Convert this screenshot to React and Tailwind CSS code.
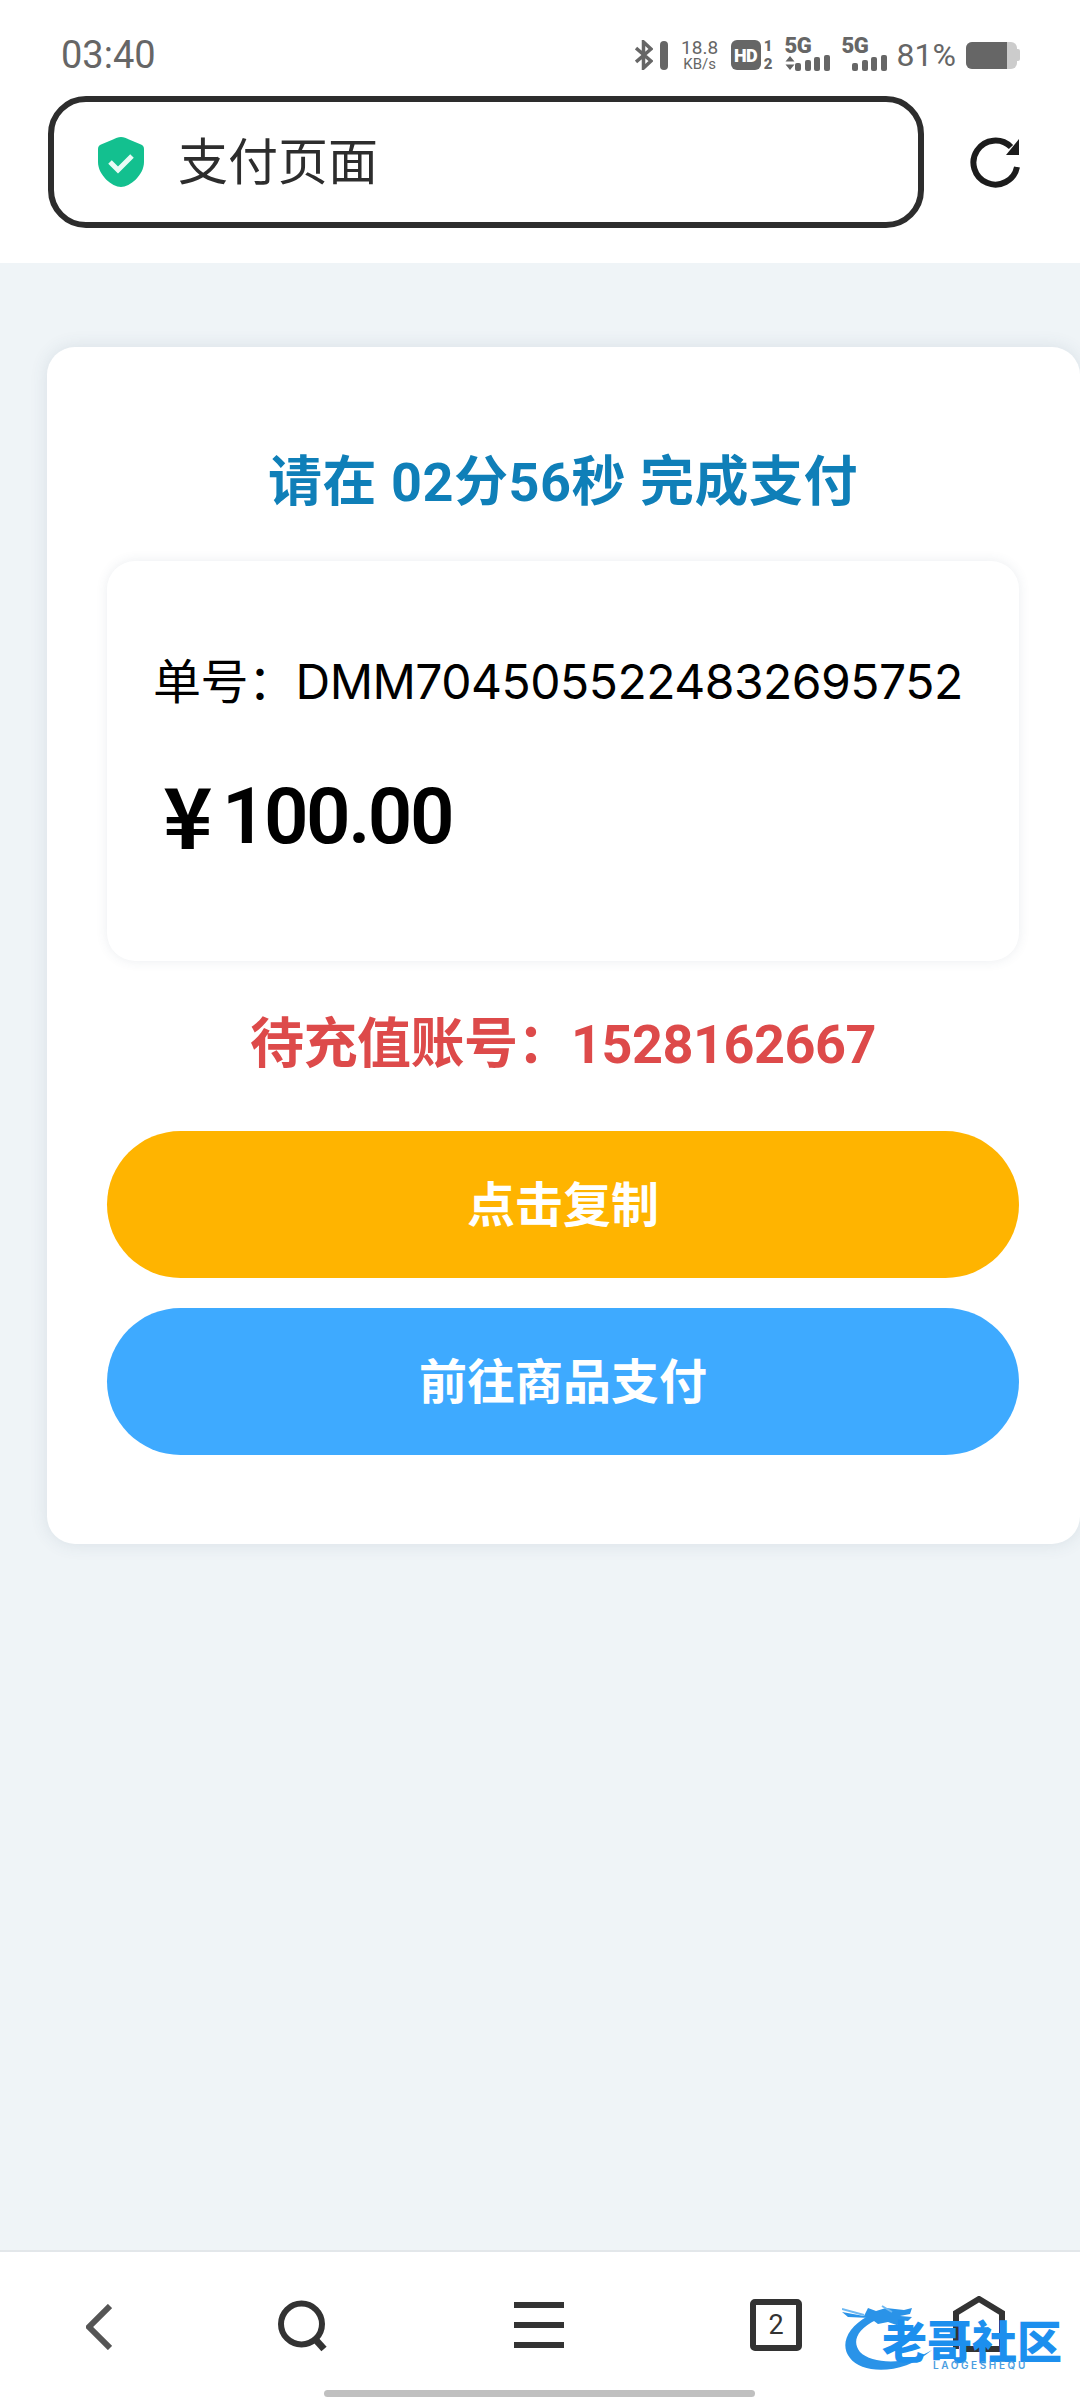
const sans = "font-['Inter','Noto_Sans_CJK_SC',sans-serif]";
const heading = "font-['Roboto','Noto_Sans_CJK_SC',sans-serif]";

// little signal meter used twice in the status bar
function SignalBars() {
  return (
    <svg width="35" height="16" viewBox="0 0 35 16" fill="#666">
      <rect x="0" y="8" width="6" height="8" rx="2" />
      <rect x="10" y="5" width="6" height="11" rx="2" />
      <rect x="19" y="2" width="6" height="14" rx="2" />
      <rect x="29" y="0" width="6" height="16" rx="2" />
    </svg>
  );
}

function SimCell({ arrows }) {
  return (
    <div className="relative w-[45px] h-[32px]">
      <span className="absolute left-0 top-[-6px] text-[22px] leading-[26px] font-black text-[#666] font-['Roboto',sans-serif] tracking-[-0.5px]">
        5G
      </span>
      {arrows && (
        <svg className="absolute left-0 top-[17px]" width="10" height="14" viewBox="0 0 10 14" fill="#666">
          <path d="M5 0l4.500 5.500h-9zM5 14L.5 8.500h9z" />
        </svg>
      )}
      <div className="absolute right-0 bottom-0 flex">
        <SignalBars />
      </div>
    </div>
  );
}

function StatusBar() {
  return (
    <div className="flex items-center h-[96px] pl-[61px] pr-[60px] pt-[14px] font-['Roboto',sans-serif]">
      <span className="text-[38px] leading-none text-[#666]">03:40</span>
      <div className="ml-auto flex items-center h-[32px]">
        <svg width="18" height="30" viewBox="0 0 18 30" fill="none" stroke="#666" strokeWidth="3.500">
          <path d="M1 8l15 13-7.500 7V2L16 9 1 22" />
        </svg>
        <div className="ml-[7px] w-[8px] h-[29px] rounded-full bg-[#666]" />
        <div className="ml-[13px] w-[38px] flex flex-col items-center text-[#666]">
          <span className="text-[19px] leading-[18px]">18.8</span>
          <span className="text-[15px] leading-[14px]">KB/s</span>
        </div>
        <div className="ml-[12px] w-[30px] h-[30px] rounded-[6px] bg-[#666] text-white text-[18px] font-black flex items-center justify-center tracking-[-0.5px]">
          HD
        </div>
        <div className="ml-[2px] w-[11px] flex flex-col items-center text-[#666] text-[15px] font-black leading-[18px]">
          <span>1</span>
          <span>2</span>
        </div>
        <div className="ml-[11px]">
          <SimCell arrows />
        </div>
        <div className="ml-[12px]">
          <SimCell />
        </div>
        <span className="ml-[10px] text-[32px] leading-none text-[#666]">81%</span>
        <div className="ml-[10px] flex items-center">
          <div className="w-[51px] h-[27px] rounded-[6px] bg-[#ccc] overflow-hidden">
            <div className="w-[41px] h-full bg-[#666]" />
          </div>
          <div className="w-[3px] h-[12px] rounded-r-[2px] bg-[#ccc]" />
        </div>
      </div>
    </div>
  );
}

function AddressBar() {
  return (
    <div className="flex items-start pl-[48px]">
      <div className="w-[876px] h-[132px] rounded-[38px] border-[6px] border-[#2d2d2d] flex items-center pl-[44px]">
        <svg width="46" height="50" viewBox="0 0 46 50">
          <path
            d="M23 0c3 0 5 1 8 2.500l12 5c2 1 3 2 3 4.500v13C46 38 32 50 23 50S0 38 0 25V12c0-2.500 1-3.500 3-4.500l12-5C18 1 20 0 23 0z"
            fill="#13c08f"
          />
          <path d="M12 25l8 8 14-14" fill="none" stroke="#e8fbf5" strokeWidth="5" />
        </svg>
        <span className="ml-[34px] text-[50px] leading-none text-[#2d2d2d]">支付页面</span>
      </div>
      <svg className="ml-[45px] mt-[41px]" width="52" height="52" viewBox="0 0 52 52" fill="none">
        <path d="M48 30A22 22 0 1 1 42 10" stroke="#1c1c1c" strokeWidth="6" />
        <path d="M50 2v16H37z" fill="#1c1c1c" />
      </svg>
    </div>
  );
}

function PaymentCard() {
  return (
    <div className="ml-[47px] mt-[84px] w-[1033px] h-[1197px] rounded-[28px] bg-white shadow-[0_0_18px_rgba(60,80,110,0.12)] pt-[108px] pl-[60px] pr-[61px] flex flex-col">
      <h1 className={`text-center text-[54px] leading-[56px] font-bold tracking-[0.5px] text-[#0f7fb8] ${heading}`}>
        请在 02分56秒 完成支付
      </h1>
      <div className="mt-[50px] h-[400px] rounded-[28px] bg-white shadow-[0_0_12px_rgba(60,80,110,0.1)] pt-[96px] pl-[46px]">
        <p className="text-[48px] leading-[50px] tracking-[-0.5px] text-black whitespace-nowrap">单号：DMM7045055224832695752</p>
        <p className="mt-[66px] pl-[10px] flex items-center text-[78px] leading-[80px] font-semibold text-black">
          <span className="w-[59px] mb-[8px] text-[84px] font-bold font-['Noto_Sans_CJK_SC',sans-serif]">¥</span>
          <span className="font-['Roboto',sans-serif] tracking-[-2.500px]">100.00</span>
        </p>
      </div>
      <p className={`mt-[54px] text-center text-[54px] leading-[60px] font-bold tracking-[-0.5px] text-[#dd4a4a] ${heading}`}>
        待充值账号：1528162667
      </p>
      <button className="mt-[56px] h-[147px] rounded-full bg-[#ffb400] text-white text-[48px] font-bold">点击复制</button>
      <button className="mt-[30px] h-[147px] rounded-full bg-[#3eaaff] text-white text-[48px] font-bold">前往商品支付</button>
    </div>
  );
}

function BottomNav() {
  return (
    <div className="relative h-[150px] bg-white border-t-[2px] border-[#e3e7ea] flex items-start pl-[86px] pt-[44px]">
      <svg className="mt-[8px]" width="26" height="46" viewBox="0 0 26 46" fill="none">
        <path d="M24 2L3 23l21 21" stroke="#555" strokeWidth="6" />
      </svg>
      <svg className="ml-[166px] mt-[4px]" width="50" height="52" viewBox="0 0 50 52" fill="none">
        <circle cx="23.500" cy="24" r="20.500" stroke="#333" strokeWidth="6" />
        <path d="M37 39l9 10" stroke="#333" strokeWidth="7" />
      </svg>
      <div className="ml-[186px] mt-[6px] w-[50px] h-[46px] flex flex-col justify-between">
        <div className="h-[6px] bg-[#333]" />
        <div className="h-[6px] bg-[#333]" />
        <div className="h-[6px] bg-[#333]" />
      </div>
      <div className="ml-[186px] mt-[3px] w-[52px] h-[52px] rounded-[5px] border-[6px] border-[#333] flex items-center justify-center text-[27px] leading-none text-[#333] font-['Roboto',sans-serif]">
        2
      </div>
      <svg className="ml-[151px]" width="52" height="56" viewBox="0 0 52 56" fill="none">
        <path d="M3 53V17L26 3l23 14v36h-9M12 53h28" stroke="#333" strokeWidth="6" />
      </svg>

      {/* community watermark over the nav bar */}
      <div className="absolute left-[842px] top-[52px] w-[222px] h-[76px]">
        <svg className="absolute inset-0" width="222" height="76" viewBox="0 0 222 76">
          <path
            d="M26 12C4 24-2 42 8 54c12 16 52 18 82-8C64 62 30 60 18 48 10 38 14 26 34 16z"
            fill="#2a93e8"
          />
          {/* dragon head and whiskers */}
          <path d="M26 4l8 3 10-3 18 2 8-2-2 6-10 2 12 1-4 4-10-1 4 7-14-5-10 2-8-6-22-1-6-5 22 4z" fill="#2a93e8" />
          <path d="M0 5l22 6M40 2l10 6M56 20l8 3" stroke="#6db8f2" strokeWidth="2" fill="none" />
        </svg>
        <span className="absolute left-[40px] top-[24px] whitespace-nowrap text-[45px] leading-[30px] font-black text-[#1c8fee]">
          老哥社区
        </span>
        <span className="absolute left-[91px] top-[55px] whitespace-nowrap text-[10px] leading-[12px] tracking-[2.600px] font-semibold text-[#4a9ee0]">
          LAOGESHEQU
        </span>
      </div>

      <div className="absolute left-[324px] bottom-[3px] w-[431px] h-[7px] rounded-full bg-[#c0c0c0]" />
    </div>
  );
}

export default function App() {
  return (
    <div className={`w-[1080px] h-[2400px] overflow-hidden flex flex-col bg-[#eff4f7] ${sans}`}>
      <div className="h-[263px] bg-white">
        <StatusBar />
        <AddressBar />
      </div>
      <div className="flex-1">
        <PaymentCard />
      </div>
      <BottomNav />
    </div>
  );
}
